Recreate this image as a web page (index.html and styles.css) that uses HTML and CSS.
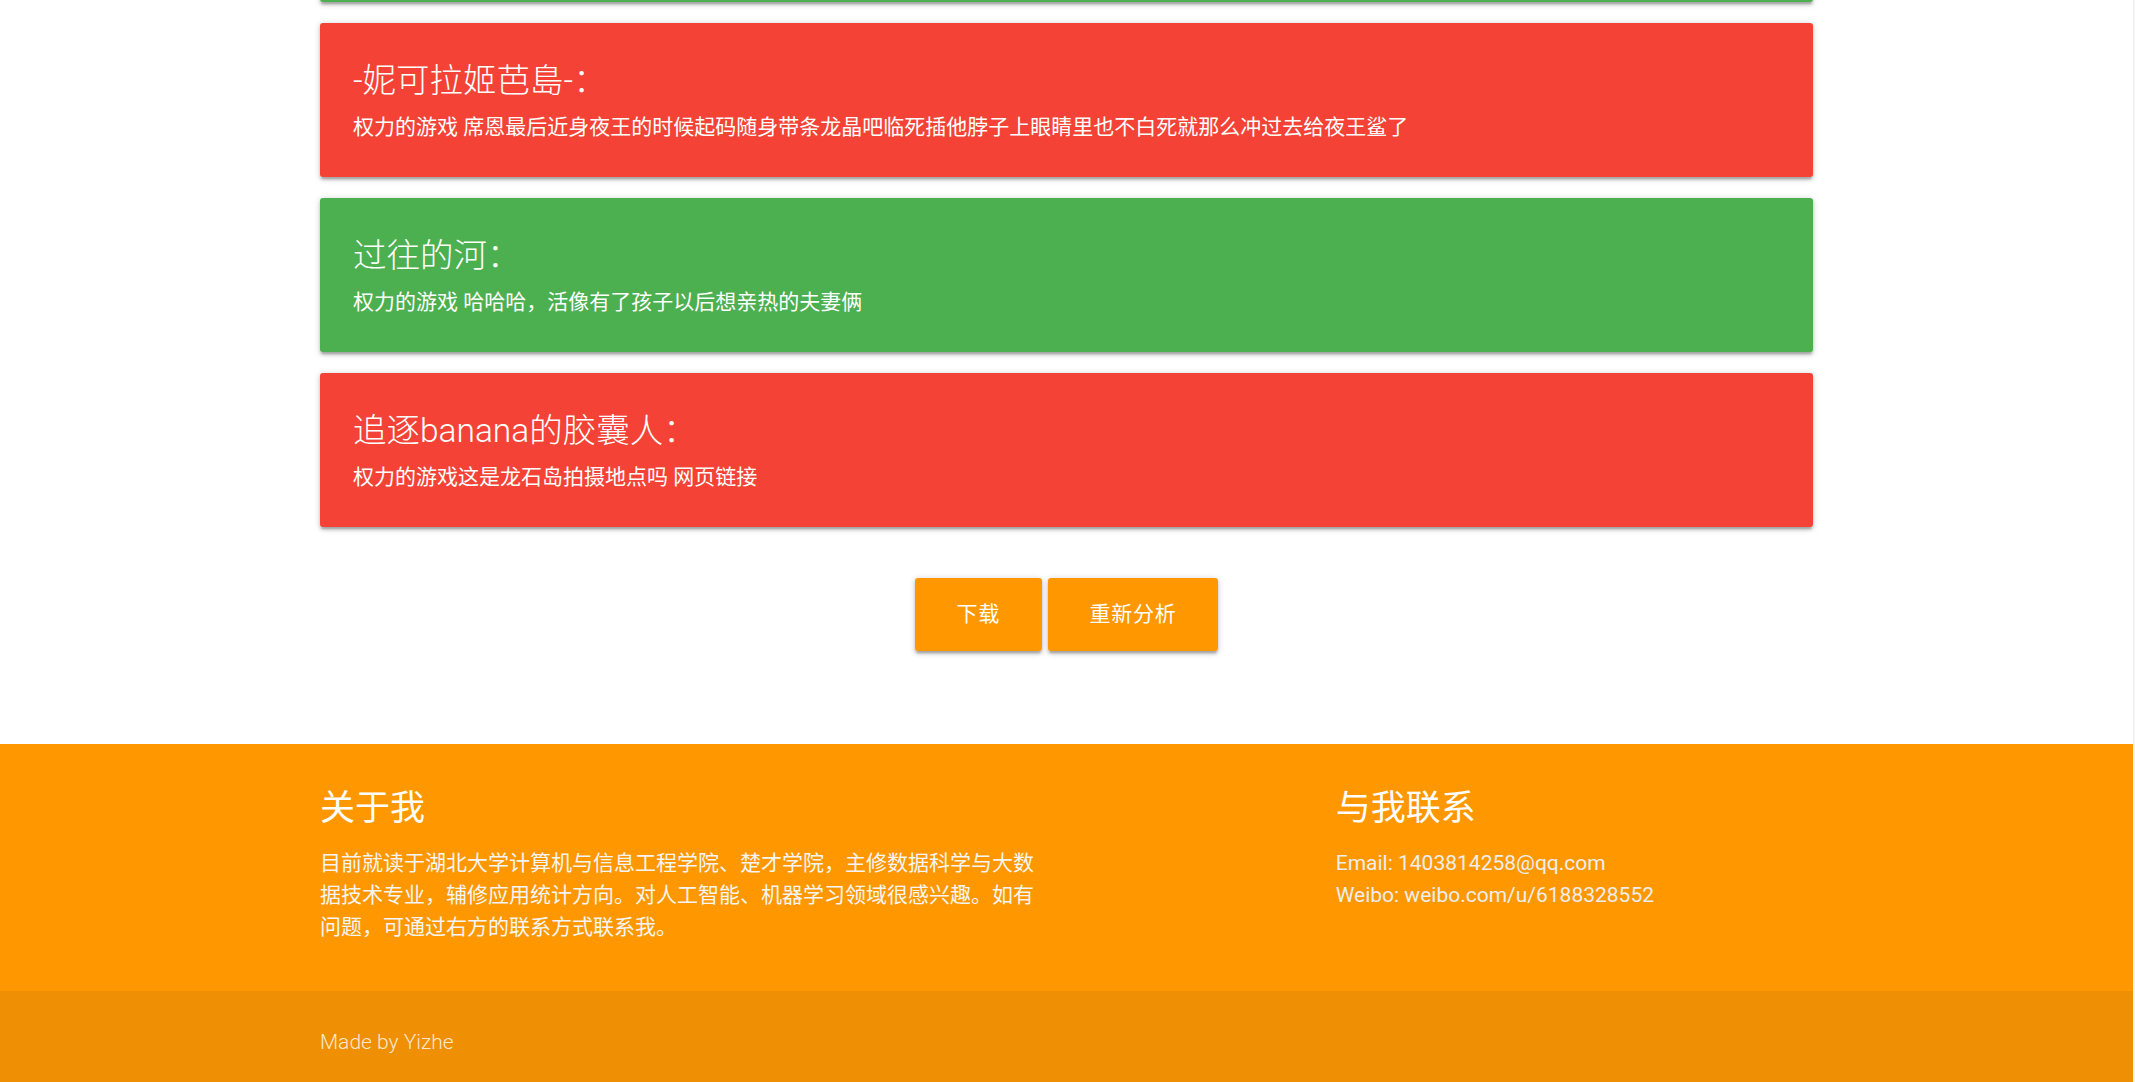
FILE: index.html
```html
<!DOCTYPE html>
<html lang="zh-CN">
<head>
<meta charset="utf-8">
<title>评论分析</title>
<link rel="stylesheet" href="styles.css">
</head>
<body>
<main class="container main">
  <div class="card card-green card-peek"></div>

  <div class="card card-red">
    <div class="card-content">
      <span class="card-title">-妮可拉姬芭島-：</span>
      <p class="card-text">权力的游戏 席恩最后近身夜王的时候起码随身带条龙晶吧临死插他脖子上眼睛里也不白死就那么冲过去给夜王鲨了</p>
    </div>
  </div>

  <div class="card card-green">
    <div class="card-content">
      <span class="card-title">过往的河：</span>
      <p class="card-text">权力的游戏 哈哈哈，活像有了孩子以后想亲热的夫妻俩</p>
    </div>
  </div>

  <div class="card card-red">
    <div class="card-content">
      <span class="card-title">追逐banana的胶囊人：</span>
      <p class="card-text">权力的游戏这是龙石岛拍摄地点吗 网页链接</p>
    </div>
  </div>

  <div class="actions">
    <a class="btn" href="#">下载</a>
    <a class="btn" href="#">重新分析</a>
  </div>
</main>

<footer class="page-footer">
  <div class="container">
    <div class="row">
      <div class="col col-about">
        <h5 class="footer-title">关于我</h5>
        <p class="footer-text">目前就读于湖北大学计算机与信息工程学院、楚才学院，主修数据科学与大数据技术专业，辅修应用统计方向。对人工智能、机器学习领域很感兴趣。如有问题，可通过右方的联系方式联系我。</p>
      </div>
      <div class="col col-contact">
        <h5 class="footer-title">与我联系</h5>
        <ul class="contact-list">
          <li><a class="contact-link" href="#">Email: 1403814258@qq.com</a></li>
          <li><a class="contact-link" href="#">Weibo: weibo.com/u/6188328552</a></li>
        </ul>
      </div>
    </div>
  </div>
  <div class="footer-copyright">
    <div class="container">Made by Yizhe</div>
  </div>
</footer>
</body>
</html>
```

FILE: styles.css
```css
html {
  background: #f1f1f1;
}

body {
  margin: 0 2px 0 0;
  background: #ffffff;
  font-family: Roboto, "Noto Sans CJK SC", sans-serif;
  font-size: 21px;
  line-height: 1.5;
  color: rgba(0, 0, 0, 0.87);
  display: flow-root;
}

.container {
  width: 70%;
  margin: 0 auto;
}

.main {
  margin-top: -152.5px;
  padding-bottom: 92.5px;
}

.card {
  border-radius: 3px;
  color: #ffffff;
  margin-bottom: 21px;
  box-shadow: 0 2.7px 2.7px 0 rgba(0, 0, 0, 0.14),
              0 4px 1.4px -2.7px rgba(0, 0, 0, 0.12),
              0 1.4px 6.8px 0 rgba(0, 0, 0, 0.2);
}

.card-red {
  background: #f44336;
}

.card-green {
  background: #4caf50;
}

.card-peek {
  height: 154px;
}

.card-content {
  padding: 33px;
}

.card-title {
  display: block;
  font-size: 33.5px;
  font-weight: 300;
  line-height: 50px;
  margin-bottom: 5px;
}

.card-text {
  margin: 0;
  font-size: 21px;
  line-height: 33px;
}

.actions {
  display: flex;
  justify-content: center;
  gap: 5.6px;
  margin-top: 51px;
}

.btn {
  display: inline-block;
  height: 73.5px;
  line-height: 73.5px;
  padding: 0 42px;
  background: #ff9800;
  color: #ffffff;
  font-size: 21px;
  letter-spacing: 0.7px;
  text-decoration: none;
  border-radius: 3px;
  box-shadow: 0 2.7px 2.7px 0 rgba(0, 0, 0, 0.14),
              0 4px 1.4px -2.7px rgba(0, 0, 0, 0.12),
              0 1.4px 6.8px 0 rgba(0, 0, 0, 0.2);
}

.page-footer {
  background: #ff9800;
  padding-top: 27px;
}

.row {
  display: flex;
  margin: 0 -15.3px;
}

.col {
  box-sizing: border-box;
  padding: 0 15.3px;
}

.col-about {
  width: 50%;
}

.col-contact {
  width: 33.3333%;
  margin-left: 16.6667%;
}

.footer-title {
  margin: 19px 0 0;
  font-size: 35px;
  font-weight: 400;
  line-height: 37px;
  color: #ffffff;
}

.footer-text {
  margin: 20px 0 48px;
  font-size: 21px;
  line-height: 32.3px;
  color: #f5f5f5;
}

.contact-list {
  list-style: none;
  margin: 20px 0 0;
  padding: 0;
  font-size: 21px;
  line-height: 32.3px;
}

.contact-link {
  color: #eeeeee;
  text-decoration: none;
}

.footer-copyright {
  box-sizing: border-box;
  height: 91px;
  padding-top: 12px;
  display: flex;
  align-items: center;
  background: rgba(51, 51, 51, 0.08);
  color: rgba(255, 255, 255, 0.8);
  font-size: 21px;
  font-weight: 300;
}
```
